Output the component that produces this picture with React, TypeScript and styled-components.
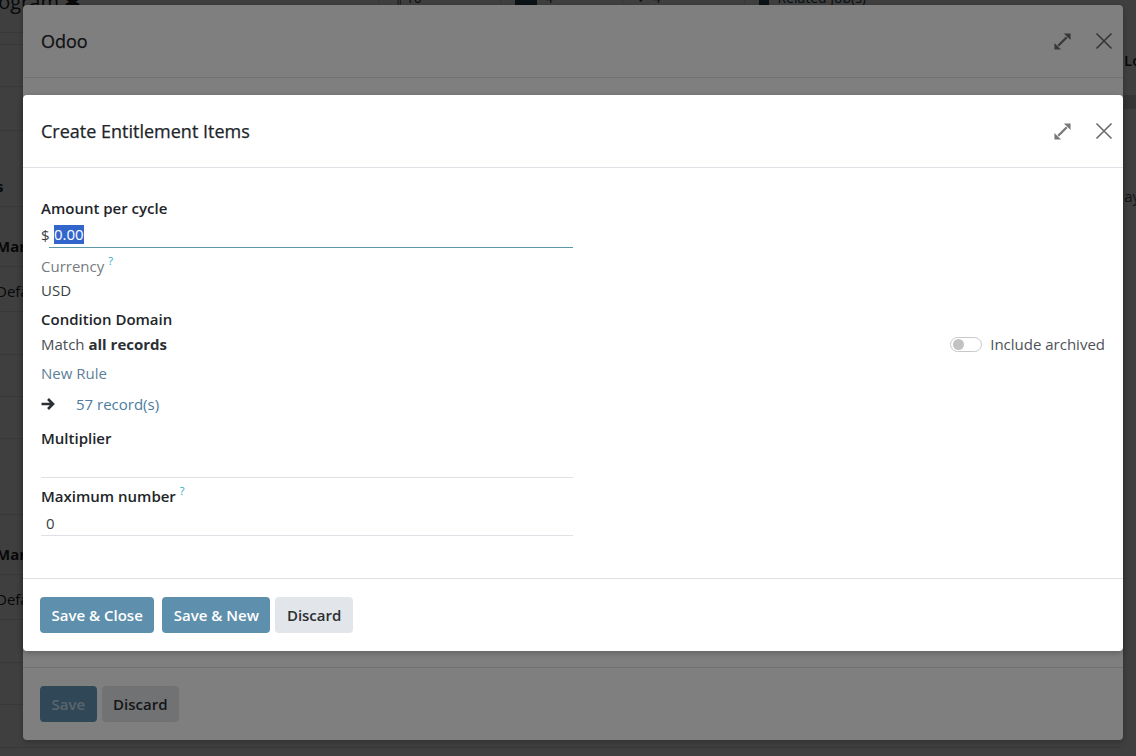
import React from 'react';
import styled, { createGlobalStyle } from 'styled-components';

const GlobalStyle = createGlobalStyle`
    html, body {
        margin: 0;
        padding: 0;
        height: 100%;
        overflow: hidden;
    }
    body {
        font-family: "Open Sans", "Noto Sans", "Liberation Sans", sans-serif;
        font-size: 15px;
        color: #212529;
        background: #ffffff;
    }
    * { box-sizing: border-box; }
`;

const Screen = styled.div`
    position: relative;
    width: 1136px;
    height: 756px;
    overflow: hidden;
    background: #ffffff;
`;

/* ---------- page behind the dialogs ---------- */

const BackPage = styled.div`
    display: grid;
    grid-template-columns: 1122px 1fr;
    height: 100%;
`;

const BackMain = styled.div`
    display: flex;
    flex-direction: column;
`;

const BackTop = styled.div`
    display: flex;
    align-items: flex-start;
    height: 33px;
    border-bottom: 1px solid #dee2e6;
`;

const Breadcrumb = styled.div`
    width: 400px;
    margin: -12px 0 0 -22px;
    font-size: 20px;
    color: #212529;
    white-space: nowrap;
`;

const StatButton = styled.div`
    width: 122px;
    height: 33px;
    border-left: 1px solid #dee2e6;
    display: flex;
    align-items: flex-start;
    gap: 8px;
    padding: 0 0 0 14px;
    margin-top: -12px;
    color: #1f3d4d;
    font-size: 14px;
    white-space: nowrap;
`;

const StatIcon = styled.span`
    display: inline-block;
    width: 22px;
    height: 22px;
    border-radius: 4px;
    background: #2b4a5c;
`;

const BackRow = styled.div<{ $h: number; $bold?: boolean }>`
    height: ${p => p.$h}px;
    display: flex;
    align-items: flex-end;
    padding-bottom: 10px;
    border-bottom: 1px solid #dee2e6;
    font-size: 15px;
    font-weight: ${p => (p.$bold ? 700 : 400)};
    color: #212529;
    margin-left: -4px;
`;

const BackSide = styled.div`
    display: flex;
    flex-direction: column;
    padding-top: 50px;
    margin-left: 2px;
    font-size: 15px;
    white-space: nowrap;
    overflow: hidden;
`;

const SideTitle = styled.div`
    height: 45px;
    font-weight: 600;
`;

const SideBand = styled.div`
    height: 14px;
    margin-left: -2px;
    background: #d4d6d9;
`;

const SideText = styled.div`
    margin: 77px 0 0 -9px;
    color: #495057;
`;

/* ---------- dialogs ---------- */

const Backdrop = styled.div<{ $pad: string }>`
    position: absolute;
    inset: 0;
    background: rgba(0, 0, 0, 0.5);
    padding: ${p => p.$pad};
    display: flex;
`;

const Dialog = styled.div`
    flex: 1;
    display: flex;
    flex-direction: column;
    background: #ffffff;
    border-radius: 4px;
    box-shadow: 0 2px 6px rgba(0, 0, 0, 0.25);
`;

const DialogHeader = styled.div`
    height: 73px;
    flex: none;
    display: flex;
    align-items: center;
    gap: 16px;
    padding: 0 6px 0 18px;
    border-bottom: 1px solid #dee2e6;
`;

const DialogTitle = styled.h4`
    flex: 1;
    margin: 0;
    font-size: 18px;
    font-weight: 500;
    color: #212529;
    -webkit-text-stroke: 0.25px #212529;
`;

const HeaderButton = styled.button<{ $tone?: string }>`
    width: 26px;
    height: 30px;
    padding: 0;
    border: 0;
    background: transparent;
    display: flex;
    align-items: center;
    justify-content: center;
    color: ${p => p.$tone ?? '#6b6b6b'};
`;

const DialogBody = styled.div`
    flex: 1;
    padding: 28px 18px 0 18px;
    display: flex;
    flex-direction: column;
`;

const DialogFooter = styled.div`
    height: 73px;
    flex: none;
    display: flex;
    align-items: center;
    padding: 0 17px;
    border-top: 1px solid #dee2e6;
`;

const Button = styled.button<{ $primary?: boolean; $gap?: number; $faded?: boolean }>`
    height: 36px;
    padding: 0 11.5px;
    margin-left: ${p => p.$gap ?? 0}px;
    border: 0;
    border-radius: 4px;
    font-family: inherit;
    font-size: 15px;
    font-weight: 600;
    background: ${p => (p.$primary ? '#5e8fac' : '#e2e5e9')};
    color: ${p => (p.$primary ? (p.$faded ? 'rgba(255,255,255,0.55)' : '#ffffff') : '#2b2f33')};
`;

/* ---------- form ---------- */

const Label = styled.div<{ $mt?: number; $muted?: boolean }>`
    margin-top: ${p => p.$mt ?? 0}px;
    line-height: 24px;
    height: 24px;
    font-weight: ${p => (p.$muted ? 400 : 600)};
    color: ${p => (p.$muted ? '#777c80' : '#212529')};
`;

const Help = styled.span`
    position: relative;
    top: -7px;
    margin-left: 4px;
    font-size: 11px;
    line-height: 0;
    font-weight: 400;
    color: #2aa6c8;
`;

const Value = styled.div<{ $mt?: number }>`
    margin-top: ${p => p.$mt ?? 0}px;
    line-height: 24px;
    color: #3a3f44;
`;

const InputLine = styled.div<{ $mt?: number }>`
    margin-top: ${p => p.$mt ?? 0}px;
    width: 532px;
    height: 26px;
    display: flex;
    align-items: center;
    gap: 0;
`;

const Currency = styled.span`
    width: 8px;
    color: #3a3f44;
`;

const Underlined = styled.div<{ $focused?: boolean }>`
    flex: 1;
    height: 26px;
    display: flex;
    align-items: center;
    padding-left: 5px;
    border-bottom: 1px solid ${p => (p.$focused ? '#5b96aa' : '#dee2e6')};
    color: #3a3f44;
`;

const Selected = styled.span`
    background: #3366cc;
    color: #ffffff;
    line-height: 19px;
    padding: 0;
`;

const MatchRow = styled.div<{ $mt?: number }>`
    margin-top: ${p => p.$mt ?? 0}px;
    height: 24px;
    display: flex;
    align-items: center;
    justify-content: space-between;
    color: #494e53;
    strong { color: #2b2f33; font-weight: 700; }
`;

const ToggleLabel = styled.label`
    display: flex;
    align-items: center;
    gap: 8px;
    color: #4c5258;
`;

const Toggle = styled.span`
    position: relative;
    width: 32px;
    height: 15px;
    border: 1px solid #c6c8ca;
    border-radius: 8px;
    background: #ffffff;
    &::after {
        content: '';
        position: absolute;
        left: 2px;
        top: 1px;
        width: 11px;
        height: 11px;
        border-radius: 50%;
        background: #c2c2c2;
    }
`;

const Link = styled.a<{ $mt?: number }>`
    display: block;
    margin-top: ${p => p.$mt ?? 0}px;
    line-height: 24px;
    color: #5d7f99;
    text-decoration: none;
`;

const RecordsRow = styled.div<{ $mt?: number }>`
    margin-top: ${p => p.$mt ?? 0}px;
    height: 24px;
    display: flex;
    align-items: center;
    gap: 21px;
    color: #2b2f33;
`;

const RecordsLink = styled.span`
    color: #4c7ca0;
    font-weight: 500;
`;

const ExpandIcon = () => (
    <svg width="19" height="19" viewBox="0 0 20 20" fill="currentColor">
        <path d="M5.5 14.5 L14.5 5.5" stroke="currentColor" strokeWidth="2.4" />
        <polygon points="11.5,1.5 18.5,1.5 18.5,8.5" />
        <polygon points="1.5,11.5 1.5,18.5 8.5,18.5" />
    </svg>
);

const CloseIcon = () => (
    <svg width="18" height="18" viewBox="0 0 18 18">
        <path d="M1.5 1.5 L16.5 16.5 M16.5 1.5 L1.5 16.5" stroke="currentColor" strokeWidth="1.6" />
    </svg>
);

const ArrowIcon = () => (
    <svg width="14" height="14" viewBox="0 0 14 14" fill="none">
        <path d="M0.5 7 H12 M7 2 L12 7 L7 12" stroke="currentColor" strokeWidth="2.6" strokeLinejoin="miter" />
    </svg>
);

const backRows: { h: number; text?: string; bold?: boolean }[] = [
    { h: 12 },
    { h: 42 },
    { h: 44 },
    { h: 76, text: 's', bold: true },
    { h: 60, text: 'Manager', bold: true },
    { h: 45, text: 'Default' },
    { h: 43 },
    { h: 42 },
    { h: 42 },
    { h: 76 },
    { h: 60, text: 'Manager', bold: true },
    { h: 45, text: 'Default' },
    { h: 43 },
    { h: 42 },
    { h: 43 },
];

const App = () => {
    return (
        <Screen>
            <GlobalStyle />
            <BackPage>
                <BackMain>
                    <BackTop>
                        <Breadcrumb>Program ✱</Breadcrumb>
                        <StatButton>¶ 10</StatButton>
                        <StatButton><StatIcon /> 4</StatButton>
                        <StatButton>✓ 4</StatButton>
                        <StatButton><StatIcon /> Related Job(s)</StatButton>
                    </BackTop>
                    {backRows.map((r, i) => (
                        <BackRow key={i} $h={r.h} $bold={r.bold}>{r.text}</BackRow>
                    ))}
                </BackMain>
                <BackSide>
                    <SideTitle>Log note</SideTitle>
                    <SideBand />
                    <SideText>days</SideText>
                </BackSide>
            </BackPage>

            <Backdrop $pad="5px 13px 16px 23px">
                <Dialog>
                    <DialogHeader>
                        <DialogTitle>Odoo</DialogTitle>
                        <HeaderButton $tone="#6f6f6f"><ExpandIcon /></HeaderButton>
                        <HeaderButton><CloseIcon /></HeaderButton>
                    </DialogHeader>
                    <DialogBody />
                    <DialogFooter>
                        <Button $primary $faded>Save</Button>
                        <Button $gap={5}>Discard</Button>
                    </DialogFooter>
                </Dialog>
            </Backdrop>

            <Backdrop $pad="95px 13px 105px 23px">
                <Dialog>
                    <DialogHeader>
                        <DialogTitle>Create Entitlement Items</DialogTitle>
                        <HeaderButton $tone="#787878"><ExpandIcon /></HeaderButton>
                        <HeaderButton><CloseIcon /></HeaderButton>
                    </DialogHeader>
                    <DialogBody>
                        <Label>Amount per cycle</Label>
                        <InputLine $mt={2}>
                            <Currency>$</Currency>
                            <Underlined $focused><Selected>0.00</Selected></Underlined>
                        </InputLine>
                        <Label $mt={6} $muted>Currency<Help>?</Help></Label>
                        <Value>USD</Value>
                        <Label $mt={5}>Condition Domain</Label>
                        <MatchRow $mt={1}>
                            <span>Match <strong>all records</strong></span>
                            <ToggleLabel><Toggle />Include archived</ToggleLabel>
                        </MatchRow>
                        <Link $mt={5}>New Rule</Link>
                        <RecordsRow $mt={7}>
                            <ArrowIcon />
                            <RecordsLink>57 record(s)</RecordsLink>
                        </RecordsRow>
                        <Label $mt={10}>Multiplier</Label>
                        <InputLine $mt={2}>
                            <Underlined />
                        </InputLine>
                        <Label $mt={6}>Maximum number<Help>?</Help></Label>
                        <InputLine $mt={2}>
                            <Underlined>0</Underlined>
                        </InputLine>
                    </DialogBody>
                    <DialogFooter>
                        <Button $primary>Save &amp; Close</Button>
                        <Button $primary $gap={8}>Save &amp; New</Button>
                        <Button $gap={5}>Discard</Button>
                    </DialogFooter>
                </Dialog>
            </Backdrop>
        </Screen>
    );
};

export default App;
